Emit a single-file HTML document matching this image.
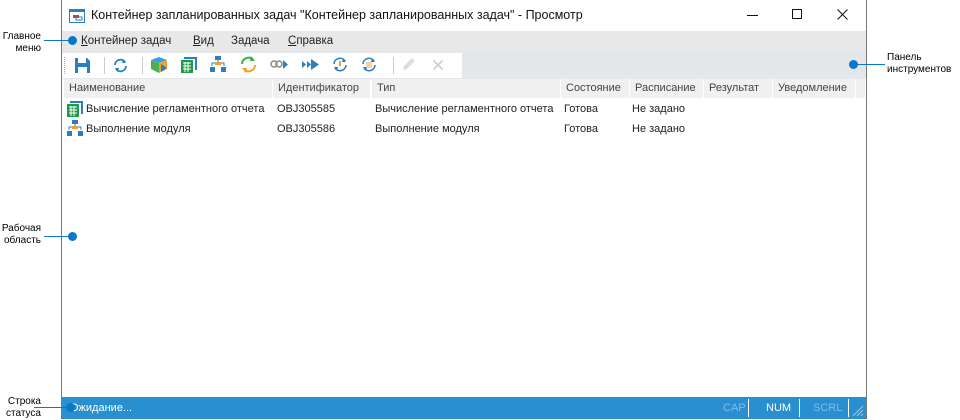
<!DOCTYPE html>
<html><head><meta charset="utf-8"><style>
*{margin:0;padding:0;box-sizing:border-box}
body{width:960px;height:419px;background:#fff;font-family:"Liberation Sans",sans-serif;font-size:11px;color:#222;position:relative;overflow:hidden}
.abs{position:absolute}
.win{left:61px;top:0;width:806px;height:419px;border:1px solid #777;border-top:none;background:#fff}
.lbl{font-size:10px;color:#000;line-height:12px}
.dot{width:9px;height:9px;border-radius:50%;background:#0a78c8}
.line{height:1px;background:#0a78c8}
.hd{top:79px;height:19px;background:#f0f0f0;line-height:19px;color:#444;padding-left:5px}
.cell{line-height:14px;color:#222}
svg{position:absolute}
</style></head><body>
<div class="abs win"></div>
<!-- title -->
<svg style="left:69px;top:9px" width="16" height="14"><rect x="0.5" y="0.5" width="15" height="13" fill="#fff" stroke="#2a7fc0"/><rect x="0" y="0" width="16" height="3" fill="#2a7fc0"/><rect x="4" y="6" width="6" height="3" fill="#d33"/><rect x="7" y="8" width="6" height="3" fill="none" stroke="#2a7fc0"/></svg>
<div class="abs" style="left:91px;top:8px;font-size:12.5px;color:#111">Контейнер запланированных задач "Контейнер запланированных задач" - Просмотр</div>
<div class="abs" style="left:747px;top:15px;width:11px;height:1px;background:#111"></div>
<div class="abs" style="left:792px;top:9px;width:10px;height:10px;border:1px solid #111"></div>
<svg style="left:837px;top:9px" width="11" height="11"><path d="M0.5 0.5L10.5 10.5M10.5 0.5L0.5 10.5" stroke="#111" stroke-width="1"/></svg>
<!-- menu -->
<div class="abs" style="left:62px;top:31px;width:804px;height:20px;background:#e8e8e8"></div>
<div class="abs" style="left:81px;top:35px;font-size:11.5px"><u>К</u>онтейнер задач</div>
<div class="abs" style="left:193px;top:35px;font-size:11.5px"><u>В</u>ид</div>
<div class="abs" style="left:231px;top:35px;font-size:11.5px">Задача</div>
<div class="abs" style="left:288px;top:35px;font-size:11.5px"><u>С</u>правка</div>
<!-- toolbar -->
<div class="abs" style="left:62px;top:51px;width:804px;height:28px;background:#e4e7ea"></div>
<div class="abs" style="left:62px;top:53px;width:400px;height:25px;background:#fff"></div>
<div class="abs" style="left:64px;top:57px;width:1px;height:17px;border-left:1px dotted #aaa"></div>
<svg style="left:75px;top:58px" width="15" height="15"><path d="M0 0H12L15 3V15H0Z" fill="#2a7fc0"/><rect x="3" y="0" width="8" height="5" fill="#fff"/><rect x="3" y="9" width="9" height="6" fill="#fff"/></svg>
<div class="abs" style="left:104px;top:57px;width:1px;height:17px;background:#ccc"></div>
<svg style="left:113px;top:58px" width="15" height="15"><path d="M2 7A5.5 5.5 0 0 1 12 4M13 8A5.5 5.5 0 0 1 3 11" fill="none" stroke="#2a7fc0" stroke-width="1.8"/><path d="M10 1L13 5L9 5Z M5 14L2 10L6 10Z" fill="#2a7fc0"/></svg>
<div class="abs" style="left:142px;top:57px;width:1px;height:17px;background:#ccc"></div>
<svg style="left:151px;top:56px" width="18" height="18"><path d="M8 1L16 4L8 7L0 4Z" fill="#3aa0dd"/><path d="M0 4L8 7V17L0 13Z" fill="#4caf50"/><path d="M16 4L8 7V17L16 13Z" fill="#f0a030"/><path d="M10 8L16 12L10 16Z" fill="#2a7fc0"/></svg>
<svg style="left:181px;top:57px" width="16" height="16"><path d="M3 0H16V13H14V2H3Z" fill="#2a7fc0"/><rect x="0" y="3" width="12" height="13" fill="#1f9a48"/><path d="M2 6H10M2 9H10M2 12H10M4 5V15M7 5V15" stroke="#fff" stroke-width="1"/></svg>
<svg style="left:210px;top:56px" width="16" height="17"><rect x="5" y="0" width="6" height="4" fill="#2a7fc0"/><path d="M8 4V7M2 10V7H14V10" stroke="#2a7fc0" fill="none"/><rect x="5" y="6" width="6" height="3" fill="#f0a030"/><rect x="0" y="11" width="5" height="5" fill="#2a7fc0"/><rect x="11" y="11" width="5" height="5" fill="#2a7fc0"/></svg>
<svg style="left:240px;top:56px" width="17" height="17"><path d="M2 8A6.5 6.5 0 0 1 13 3.5" fill="none" stroke="#3ab04a" stroke-width="2"/><path d="M15 9A6.5 6.5 0 0 1 4 13.5" fill="none" stroke="#f0a030" stroke-width="2"/><path d="M11 0L15 5L10 5Z" fill="#3ab04a"/><path d="M6 17L2 12L7 12Z" fill="#f0a030"/></svg>
<svg style="left:270px;top:59px" width="18" height="11"><circle cx="4" cy="5" r="3" fill="none" stroke="#888" stroke-width="1.5"/><circle cx="9" cy="5" r="3" fill="none" stroke="#888" stroke-width="1.5"/><path d="M13 1L18 5.5L13 10Z" fill="#2a7fc0"/></svg>
<svg style="left:302px;top:59px" width="17" height="11"><path d="M0 2L4 5.5L0 9ZM5 2L9 5.5L5 9ZM9 0L17 5.5L9 11Z" fill="#2a7fc0"/></svg>
<svg style="left:332px;top:57px" width="16" height="15"><path d="M2 7A6 6 0 0 1 13 4M14 8A6 6 0 0 1 3 11" fill="none" stroke="#2a7fc0" stroke-width="1.6"/><path d="M11 1L14 5L10 5Z M5 14L2 10L6 10Z" fill="#2a7fc0"/><rect x="7" y="4" width="2" height="5" fill="#f0a030"/></svg>
<svg style="left:361px;top:57px" width="16" height="15"><path d="M2 7A6 6 0 0 1 13 4M14 8A6 6 0 0 1 3 11" fill="none" stroke="#2a7fc0" stroke-width="1.6"/><path d="M11 1L14 5L10 5Z M5 14L2 10L6 10Z" fill="#2a7fc0"/><path d="M5 6H11M5 8H11M5 10H11" stroke="#f0a030"/></svg>
<div class="abs" style="left:393px;top:57px;width:1px;height:17px;background:#ccc"></div>
<svg style="left:401px;top:57px" width="15" height="15"><path d="M2 13L3 9L11 1L14 4L6 12Z" fill="#ddd"/></svg>
<svg style="left:433px;top:60px" width="10" height="10"><path d="M0.5 0.5L9.5 9.5M9.5 0.5L0.5 9.5" stroke="#ccc" stroke-width="1.6"/></svg>
<!-- header -->
<div class="abs hd" style="left:64px;width:208px">Наименование</div>
<div class="abs hd" style="left:273px;width:97px">Идентификатор</div>
<div class="abs hd" style="left:372px;width:188px">Тип</div>
<div class="abs hd" style="left:561px;width:68px">Состояние</div>
<div class="abs hd" style="left:630px;width:73px">Расписание</div>
<div class="abs hd" style="left:704px;width:68px">Результат</div>
<div class="abs hd" style="left:773px;width:82px">Уведомление</div>
<div class="abs hd" style="left:856px;width:9px;padding:0"></div>
<!-- rows -->
<svg style="left:67px;top:101px" width="16" height="16"><path d="M3 0H16V13H14V2H3Z" fill="#2a7fc0"/><rect x="0" y="3" width="12" height="13" fill="#1f9a48"/><path d="M2 6H10M2 9H10M2 12H10M4 5V15M7 5V15" stroke="#fff" stroke-width="1"/></svg>
<svg style="left:67px;top:120px" width="16" height="17"><rect x="5" y="0" width="6" height="4" fill="#2a7fc0"/><path d="M8 4V7M2 10V7H14V10" stroke="#2a7fc0" fill="none"/><rect x="5" y="6" width="6" height="3" fill="#f0a030"/><rect x="0" y="11" width="5" height="5" fill="#2a7fc0"/><rect x="11" y="11" width="5" height="5" fill="#2a7fc0"/></svg>
<div class="abs cell" style="left:86px;top:102px">Вычисление регламентного отчета</div>
<div class="abs cell" style="left:277px;top:102px">OBJ305585</div>
<div class="abs cell" style="left:375px;top:102px">Вычисление регламентного отчета</div>
<div class="abs cell" style="left:564px;top:102px">Готова</div>
<div class="abs cell" style="left:632px;top:102px">Не задано</div>
<div class="abs cell" style="left:86px;top:122px">Выполнение модуля</div>
<div class="abs cell" style="left:277px;top:122px">OBJ305586</div>
<div class="abs cell" style="left:375px;top:122px">Выполнение модуля</div>
<div class="abs cell" style="left:564px;top:122px">Готова</div>
<div class="abs cell" style="left:632px;top:122px">Не задано</div>
<!-- status -->
<div class="abs" style="left:62px;top:397px;width:804px;height:22px;background:#2a8fce"></div>
<div class="abs" style="left:70px;top:402px;color:#fff;font-size:11px">Ожидание...</div>
<div class="abs" style="left:723px;top:402px;color:#7fbde6">CAP</div>
<div class="abs" style="left:748px;top:399px;width:1px;height:18px;background:#fff"></div>
<div class="abs" style="left:766px;top:402px;color:#fff">NUM</div>
<div class="abs" style="left:799px;top:399px;width:1px;height:18px;background:#fff"></div>
<div class="abs" style="left:813px;top:402px;color:#7fbde6">SCRL</div>
<div class="abs" style="left:848px;top:399px;width:1px;height:18px;background:#fff"></div>
<svg style="left:852px;top:404px" width="12" height="13"><path d="M11 2L1 12M11 6L5 12M11 10L9 12" stroke="#9cc8e8"/></svg>
<!-- annotations -->
<div class="abs lbl" style="left:0;top:31px;text-align:right;width:41px">Главное<br>меню</div>
<div class="abs line" style="left:44px;top:40px;width:28px"></div>
<div class="abs dot" style="left:68px;top:36px"></div>
<div class="abs dot" style="left:849px;top:60px"></div>
<div class="abs line" style="left:855px;top:64px;width:30px"></div>
<div class="abs lbl" style="left:887px;top:52px">Панель<br>инструментов</div>
<div class="abs lbl" style="left:0;top:223px;text-align:right;width:41px">Рабочая<br>область</div>
<div class="abs line" style="left:44px;top:236px;width:26px"></div>
<div class="abs dot" style="left:68px;top:232px"></div>
<div class="abs lbl" style="left:0;top:396px;text-align:right;width:41px">Строка<br>статуса</div>
<div class="abs line" style="left:34px;top:407px;width:34px"></div>
<div class="abs dot" style="left:66px;top:403px"></div>
</body></html>
